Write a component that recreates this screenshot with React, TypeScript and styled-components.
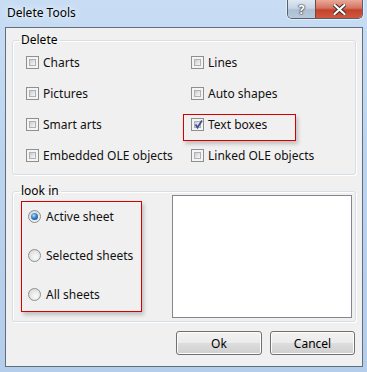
import React from "react";
import styled, { createGlobalStyle } from "styled-components";

const GlobalStyle = createGlobalStyle`
  html, body { margin: 0; padding: 0; }
  body {
    font-family: "Noto Sans", "Liberation Sans", sans-serif;
    font-size: 12px;
    color: #111;
  }
`;

const Window = styled.div`
  width: 367px;
  height: 372px;
  box-sizing: border-box;
  display: flex;
  flex-direction: column;
  padding: 0 4px 5px 5px;
  background: linear-gradient(180deg, #c8ddf4 0%, #bcd5ef 40%, #b3cdeb 100%);
`;

const TitleBar = styled.div`
  height: 27px;
  display: flex;
  justify-content: space-between;
  align-items: flex-start;
`;

const Title = styled.div`
  margin: 5px 0 0 2px;
  font-size: 12px;
  line-height: 16px;
  color: #000;
  text-shadow: 0 0 8px #eef5fc, 0 0 4px #eef5fc;
`;

const Caption = styled.div`
  display: flex;
  height: 18px;
  border: 1px solid #56606e;
  border-top: none;
  border-radius: 0 0 5px 5px;
  overflow: hidden;
  box-shadow: 0 0 0 1px rgba(255, 255, 255, 0.5);
`;

const CaptionBtn = styled.div<{ $close?: boolean }>`
  width: ${(p) => (p.$close ? "46px" : "27px")};
  display: flex;
  align-items: center;
  justify-content: center;
  border-left: ${(p) => (p.$close ? "1px solid #6b4a44" : "none")};
  background: ${(p) =>
    p.$close
      ? "linear-gradient(180deg, #e9a99a 0%, #d6735f 45%, #c3422b 55%, #d0583e 100%)"
      : "linear-gradient(180deg, #dfe8f3 0%, #c8d5e5 45%, #aebed3 55%, #b9c9dc 100%)"};
  color: #fff;
  font-weight: bold;
  font-size: 13px;
  line-height: 1;
  text-shadow: 0 0 1px #333, 0 0 1px #333, 0 0 2px #333;
`;

const Client = styled.div`
  flex: 1;
  box-sizing: border-box;
  background: #f0f0f0;
  border: 1px solid #616d7e;
  padding: 5px 6px 0 6px;
  display: flex;
  flex-direction: column;
`;

const Group = styled.fieldset<{ $top?: number }>`
  margin: ${(p) => p.$top ?? 0}px 0 0 0;
  padding: 0;
  min-width: 0;
  border: 1px solid #d5dfe5;
  border-radius: 3px;
  box-shadow: inset 1px 1px 0 #fff, 1px 1px 0 #fff;
`;

const Legend = styled.legend`
  margin-left: 6px;
  padding: 0 2px;
  line-height: 14px;
  color: #000;
`;

const CheckGrid = styled.div`
  display: grid;
  grid-template-columns: 165px 1fr;
  grid-auto-rows: 31px;
  padding: 0 0 3px 13px;
`;

const Item = styled.label`
  position: relative;
  display: flex;
  align-items: center;
  gap: 4px;
  white-space: nowrap;
`;

const Box = styled.span`
  width: 13px;
  height: 13px;
  box-sizing: border-box;
  border: 1px solid #8e8f8f;
  background: #f4f4f4;
  padding: 2px;
  display: flex;
  position: relative;

  &::before {
    content: "";
    flex: 1;
    border: 1px solid #adb1b6;
    background: linear-gradient(135deg, #c9ccd0 0%, #e4e5e7 55%, #f7f7f7 100%);
  }

  svg {
    position: absolute;
    left: 1px;
    top: 0px;
  }
`;

/* red annotation frame drawn over the content it highlights */
const RedMark = styled.span<{ $l: number; $t: number; $w: number; $h: number }>`
  position: absolute;
  left: ${(p) => p.$l}px;
  top: ${(p) => p.$t}px;
  width: ${(p) => p.$w}px;
  height: ${(p) => p.$h}px;
  box-sizing: border-box;
  border: 1px solid #d40000;
  box-shadow: 2px 3px 4px rgba(0, 0, 0, 0.2);
  pointer-events: none;
`;

const Check = ({ checked }: { checked?: boolean }) => (
  <Box>
    {checked && (
      <svg width="11" height="11" viewBox="0 0 11 11">
        <path d="M2.5 5.5 L4.5 8.5 L9 1.5" fill="none" stroke="#3d5393" strokeWidth="1.8" />
      </svg>
    )}
  </Box>
);

const LookRow = styled.div`
  display: flex;
  justify-content: space-between;
  align-items: flex-start;
  padding: 0 3px 3px 8px;
`;

const SheetChoices = styled.div`
  position: relative;
  margin-top: 3px;
  width: 121px;
  height: 111px;
  box-sizing: border-box;
  padding: 6px 7px 0 7px;
  display: flex;
  flex-direction: column;
  gap: 21px;
`;

const RadioItem = styled.label`
  display: flex;
  align-items: center;
  gap: 5px;
  height: 18px;
  white-space: nowrap;
`;

const Dot = styled.span<{ $on?: boolean }>`
  width: 13px;
  height: 13px;
  box-sizing: border-box;
  border-radius: 50%;
  border: 1px solid #8e8f8f;
  background: radial-gradient(circle at 60% 65%, #fafafa 0%, #e2e3e4 60%, #c9cbcd 100%);
  display: flex;
  align-items: center;
  justify-content: center;

  &::after {
    content: "";
    width: 7px;
    height: 7px;
    border-radius: 50%;
    display: ${(p) => (p.$on ? "block" : "none")};
    background: radial-gradient(circle at 40% 35%, #b6e2fb 0%, #3d8ad0 40%, #15508f 80%, #0e3b6e 100%);
  }
`;

const ListBox = styled.div`
  margin-top: -3px;
  width: 180px;
  height: 123px;
  box-sizing: border-box;
  background: #fff;
  border: 1px solid #828790;
`;

const Footer = styled.div`
  display: flex;
  justify-content: flex-end;
  gap: 8px;
  margin-top: 9px;
  padding-right: 1px;
`;

const Button = styled.button<{ $w: number }>`
  width: ${(p) => p.$w}px;
  height: 24px;
  border: 1px solid #707070;
  border-radius: 3px;
  font-family: "Noto Sans", "Liberation Sans", sans-serif;
  font-size: 12px;
  color: #000;
  padding: 0;
  background: linear-gradient(180deg, #f2f2f2 0%, #ebebeb 50%, #dddddd 50%, #cfcfcf 100%);
  box-shadow: inset 0 0 0 1px #fcfcfc;
`;

const deleteItems: { label: string; checked?: boolean; marked?: boolean }[] = [
  { label: "Charts" },
  { label: "Lines" },
  { label: "Pictures" },
  { label: "Auto shapes" },
  { label: "Smart arts" },
  { label: "Text boxes", checked: true, marked: true },
  { label: "Embedded OLE objects" },
  { label: "Linked OLE objects" },
];

const sheets = [
  { label: "Active sheet", on: true },
  { label: "Selected sheets" },
  { label: "All sheets" },
];

export default function App() {
  return (
    <>
      <GlobalStyle />
      <Window>
        <TitleBar>
          <Title>Delete Tools</Title>
          <Caption>
            <CaptionBtn>?</CaptionBtn>
            <CaptionBtn $close>
              <svg width="13" height="11" viewBox="0 0 13 11">
                <path
                  d="M1.5 1 L11.5 10 M11.5 1 L1.5 10"
                  stroke="#3a2a28"
                  strokeWidth="4"
                  strokeLinecap="round"
                />
                <path
                  d="M1.5 1 L11.5 10 M11.5 1 L1.5 10"
                  stroke="#fff"
                  strokeWidth="2.2"
                  strokeLinecap="round"
                />
              </svg>
            </CaptionBtn>
          </Caption>
        </TitleBar>
        <Client>
          <Group>
            <Legend>Delete</Legend>
            <CheckGrid>
              {deleteItems.map((it) => (
                <Item key={it.label}>
                  <Check checked={it.checked} />
                  {it.label}
                  {it.marked && <RedMark $l={-8} $t={5} $w={113} $h={27} />}
                </Item>
              ))}
            </CheckGrid>
          </Group>
          <Group $top={9}>
            <Legend>look in</Legend>
            <LookRow>
              <SheetChoices>
                {sheets.map((s) => (
                  <RadioItem key={s.label}>
                    <Dot $on={s.on} />
                    {s.label}
                  </RadioItem>
                ))}
                <RedMark $l={0} $t={0} $w={121} $h={111} />
              </SheetChoices>
              <ListBox />
            </LookRow>
          </Group>
          <Footer>
            <Button $w={86}>Ok</Button>
            <Button $w={85}>Cancel</Button>
          </Footer>
        </Client>
      </Window>
    </>
  );
}
